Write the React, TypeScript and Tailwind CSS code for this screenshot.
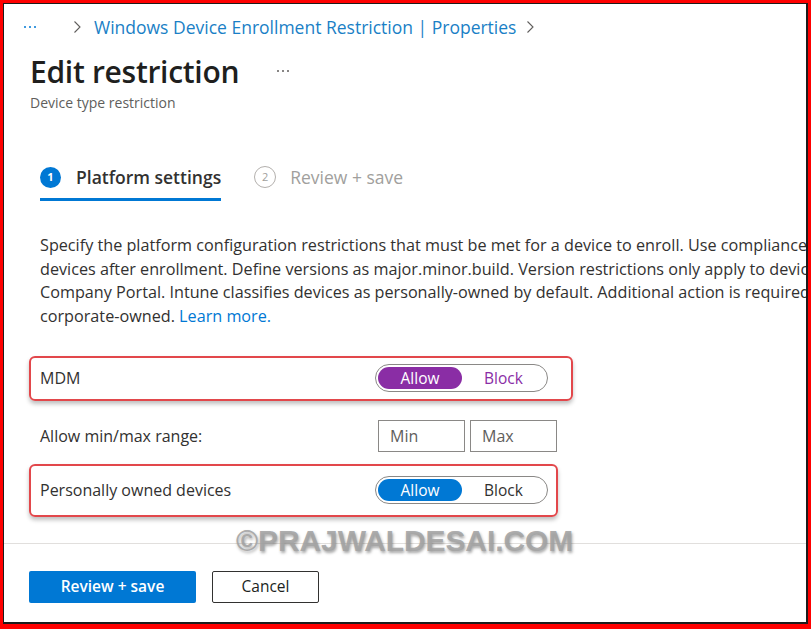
import React from "react";

const font = { fontFamily: '"Open Sans", "Noto Sans", sans-serif' };

function Toggle({ color }: { color: "purple" | "blue" }) {
  const fill = color === "purple" ? "bg-[#8a2da5]" : "bg-[#0078d4]";
  const blockText = color === "purple" ? "text-[#8a2da5]" : "text-[#323130]";
  return (
    <div className="flex h-[28px] w-[173px] items-center rounded-full border border-[#8a8886] bg-white p-[2px]">
      <div className={`flex h-[22px] w-[84px] items-center justify-center rounded-full text-[15.5px] text-white ${fill}`}>
        Allow
      </div>
      <div className={`flex flex-1 items-center justify-center text-[15.5px] ${blockText}`}>Block</div>
    </div>
  );
}

function Dots({ className }: { className?: string }) {
  return (
    <span className={`flex items-center gap-[3px] ${className ?? ""}`}>
      <span className="h-[2px] w-[2px] rounded-full bg-current" />
      <span className="h-[2px] w-[2px] rounded-full bg-current" />
      <span className="h-[2px] w-[2px] rounded-full bg-current" />
    </span>
  );
}

function Chevron() {
  return (
    <svg width="10" height="14" viewBox="0 0 10 14" fill="none" className="text-[#605e5c]">
      <path d="M2.5 1.5 L8 7 L2.5 12.5" stroke="currentColor" strokeWidth="1.1" />
    </svg>
  );
}

export default function App() {
  return (
    <div className="h-[629px] w-[811px] border-[3px] border-b-[5px] border-[#ff0000] bg-white" style={font}>
      <div className="relative flex h-full w-full flex-col overflow-hidden border border-r-2 border-b-2 border-[#1c1c1c] bg-white text-[#323130]">
        {/* breadcrumb */}
        <div className="mt-[11px] flex h-[24px] items-center pl-[20px]">
          <Dots className="text-[#0078d4]" />
          <span className="ml-[36px]"><Chevron /></span>
          <span className="ml-[12px] text-[17.5px] text-[#1a7fc6]">Windows Device Enrollment Restriction | Properties</span>
          <span className="ml-[9px]"><Chevron /></span>
        </div>

        {/* title */}
        <div className="mt-[12px] flex h-[40px] items-center pl-[26px]">
          <h1 className="text-[30px] font-semibold tracking-[-0.3px] text-[#201f1e]">Edit restriction</h1>
          <Dots className="ml-[38px] text-[#605e5c]" />
        </div>
        <div className="mt-[2px] h-[20px] pl-[26px] text-[14px] leading-[20px] text-[#605e5c]">Device type restriction</div>

        {/* steps */}
        <div className="mt-[52px] flex pl-[36px]">
          <div className="flex flex-col">
            <div className="flex h-[24px] items-center">
              <span className="flex h-[21px] w-[21px] items-center justify-center rounded-full bg-[#0078d4] text-[11px] font-bold text-white">1</span>
              <span className="ml-[15px] text-[17.5px] font-semibold text-[#323130]">Platform settings</span>
            </div>
            <div className="mt-[9px] h-[3px] w-full bg-[#0078d4]" />
          </div>
          <div className="ml-[33px] flex h-[24px] items-center">
            <span className="flex h-[22px] w-[22px] items-center justify-center rounded-full border-[1.5px] border-[#b3b0ad] text-[11px] text-[#a19f9d]">2</span>
            <span className="ml-[14px] text-[17.5px] text-[#a19f9d]">Review + save</span>
          </div>
        </div>

        {/* description */}
        <div className="mt-[33px] pl-[36px] text-[16.2px] leading-[23.7px] text-[#323130]">
          <div className="whitespace-nowrap">Specify the platform configuration restrictions that must be met for a device to enroll. Use compliance policies to restrict</div>
          <div className="whitespace-nowrap">devices after enrollment. Define versions as major.minor.build. Version restrictions only apply to devices enrolled with the</div>
          <div className="whitespace-nowrap">Company Portal. Intune classifies devices as personally-owned by default. Additional action is required to classify devices as</div>
          <div className="whitespace-nowrap">
            corporate-owned. <span className="text-[#0078d4]">Learn more.</span>
          </div>
        </div>

        {/* MDM */}
        <div className="ml-[25px] mt-[27px] flex h-[45px] w-[544px] items-center rounded-[6px] border-2 border-[#e2474b] pl-[9px] shadow-[0_3px_4px_rgba(0,0,0,0.25)]">
          <span className="w-[335px] text-[16px]">MDM</span>
          <Toggle color="purple" />
        </div>

        {/* min max */}
        <div className="mt-[19px] flex h-[32px] items-center pl-[36px]">
          <span className="w-[338px] text-[16px]">Allow min/max range:</span>
          <div className="flex h-[32px] w-[87px] items-center border border-[#8a8886] pl-[11px] text-[16px] text-[#605e5c]">Min</div>
          <div className="ml-[5px] flex h-[32px] w-[87px] items-center border border-[#8a8886] pl-[11px] text-[16px] text-[#605e5c]">Max</div>
        </div>

        {/* personally owned */}
        <div className="ml-[25px] mt-[12px] flex h-[53px] w-[529px] items-center rounded-[6px] border-2 border-[#e2474b] pl-[9px] shadow-[0_3px_4px_rgba(0,0,0,0.25)]">
          <span className="w-[335px] text-[16px]">Personally owned devices</span>
          <Toggle color="blue" />
        </div>

        <div className="mt-[26px] h-px w-full bg-[#e1dfdd]" />

        {/* buttons */}
        <div className="mt-[27px] flex pl-[25px]">
          <button className="flex h-[32px] w-[167px] items-center justify-center rounded-[2px] bg-[#0078d4] text-[15.5px] font-semibold text-white">
            Review + save
          </button>
          <button className="ml-[16px] flex h-[32px] w-[107px] items-center justify-center rounded-[2px] border border-[#323130] bg-white text-[15.5px] text-[#201f1e]">
            Cancel
          </button>
        </div>

        {/* watermark */}
        <div
          className="absolute left-[232px] top-[514px] text-[30px] font-bold tracking-[-0.1px] text-[#a3a3a3]/90"
          style={{ fontFamily: '"Liberation Sans", Arial, sans-serif', textShadow: "1px 2px 3px rgba(0,0,0,0.35)" }}
        >
          ©PRAJWALDESAI.COM
        </div>
      </div>
    </div>
  );
}
